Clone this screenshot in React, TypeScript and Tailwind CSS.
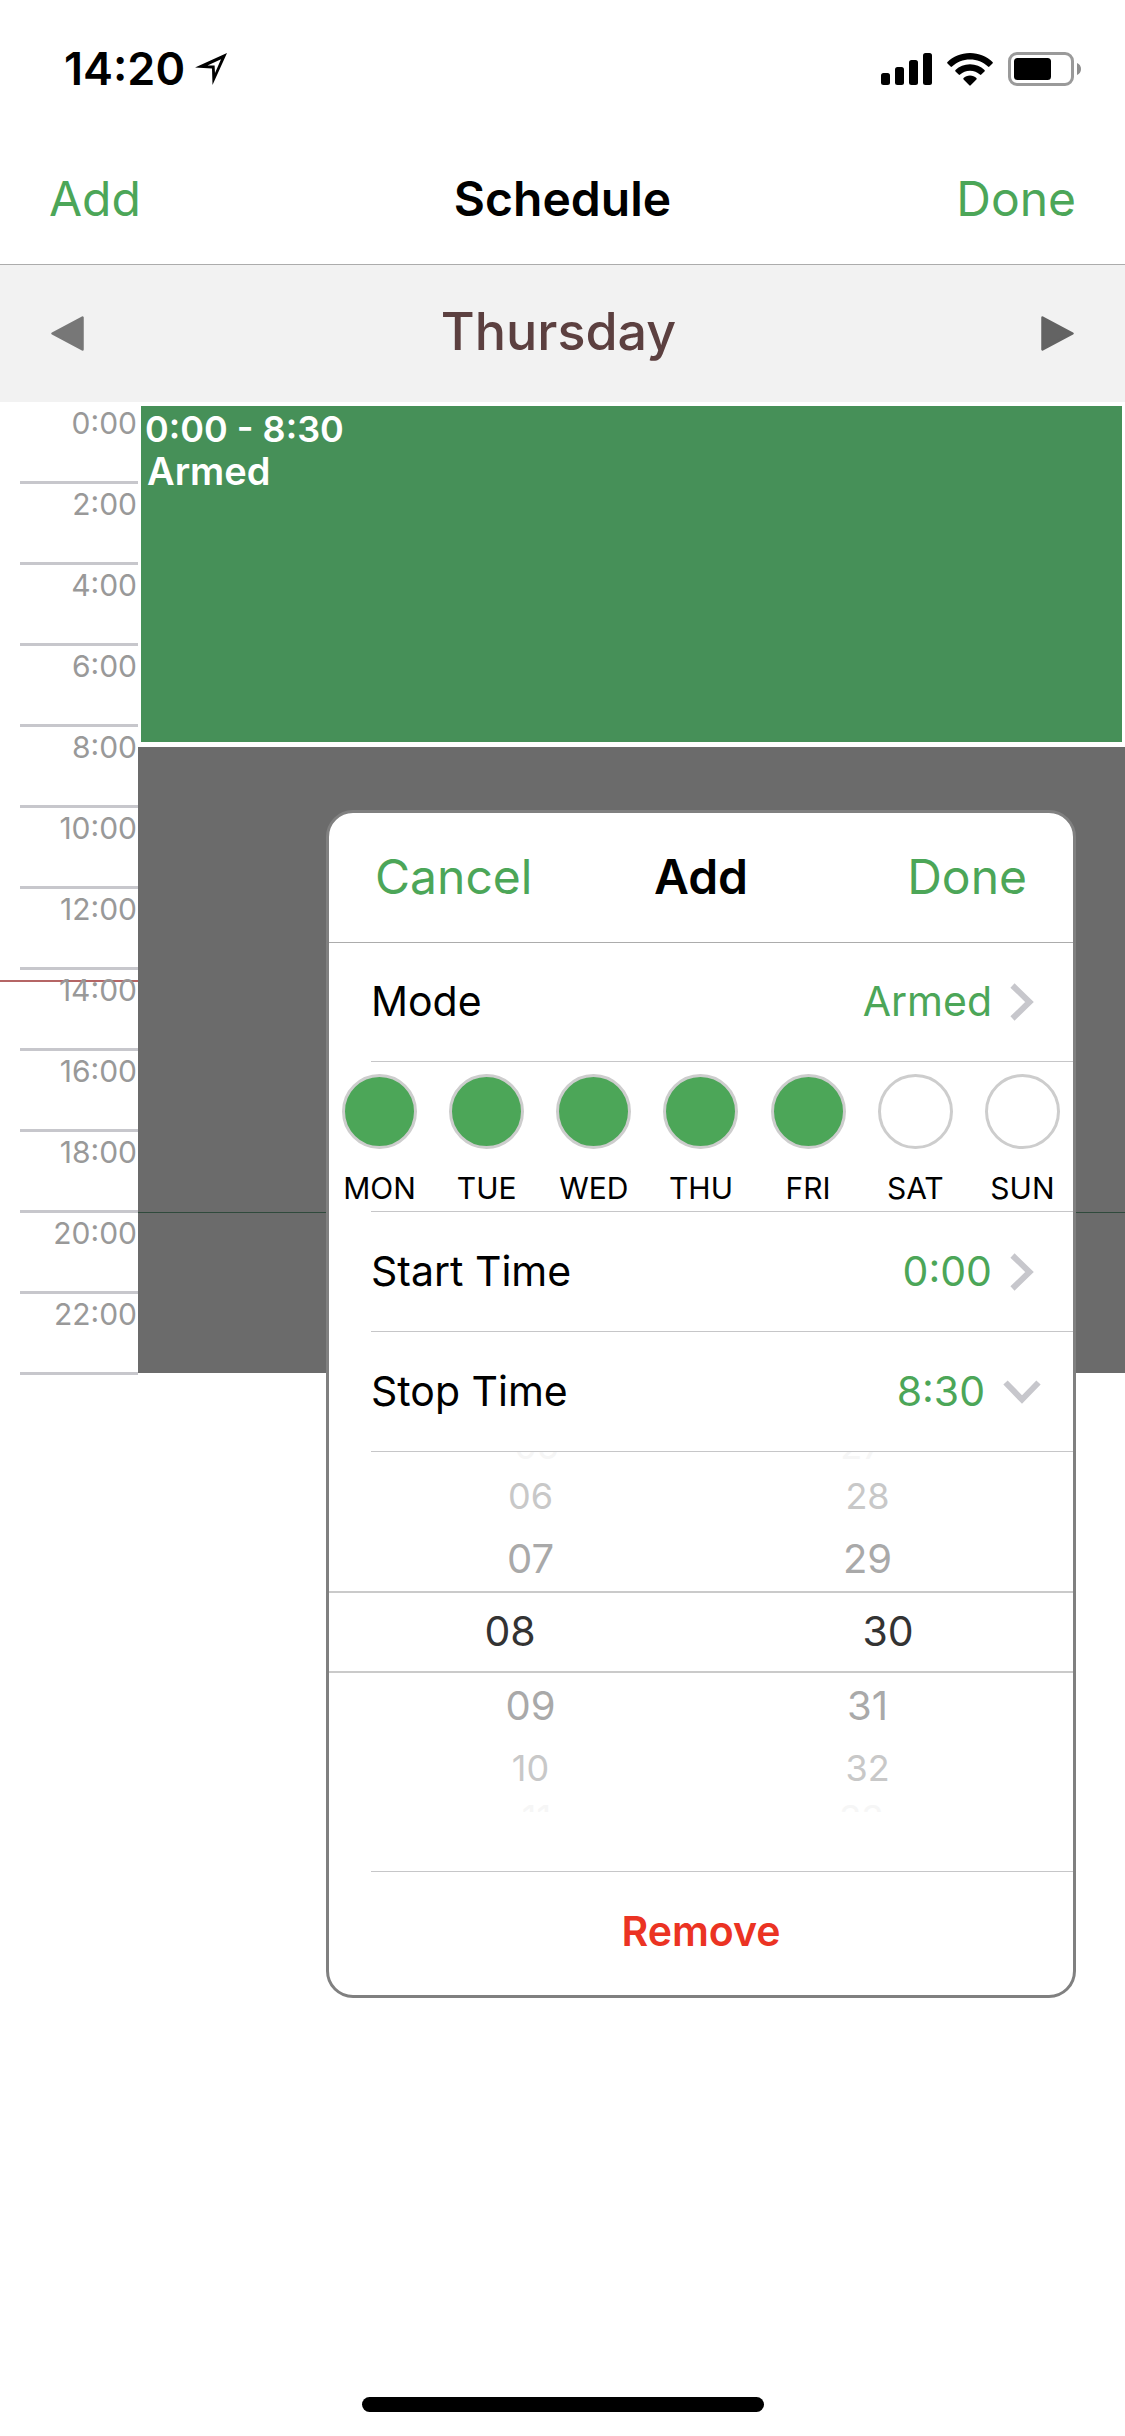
import React, { useState } from "react";

const HOURS = [
  "0:00",
  "2:00",
  "4:00",
  "6:00",
  "8:00",
  "10:00",
  "12:00",
  "14:00",
  "16:00",
  "18:00",
  "20:00",
  "22:00",
];

const DAYS = ["MON", "TUE", "WED", "THU", "FRI", "SAT", "SUN"];

// Wheel rows fade out the further they are from the selected one
const WHEEL_ROWS = [
  {
    hour: "05",
    minute: "27",
    className:
      "mx-auto h-[14px] max-w-[650px] content-end text-4xl leading-[40px] text-[#f6f6f6]",
  },
  {
    hour: "06",
    minute: "28",
    className: "mx-auto h-[60px] max-w-[674px] items-center text-4xl text-[#c8c8c8]",
  },
  {
    hour: "07",
    minute: "29",
    className: "mx-auto h-[65px] max-w-[674px] items-center text-[40px] text-[#a9a9a9]",
  },
  {
    hour: "08",
    minute: "30",
    className:
      "-mx-2 h-[82px] items-center border-y-2 border-[#cacaca] text-[41px] text-[#333]",
  },
  {
    hour: "09",
    minute: "31",
    className: "mx-auto h-[65px] max-w-[674px] items-center text-[40px] text-[#a9a9a9]",
  },
  {
    hour: "10",
    minute: "32",
    className: "mx-auto h-[60px] max-w-[674px] items-center text-4xl text-[#c8c8c8]",
  },
  {
    hour: "11",
    minute: "33",
    className:
      "mx-auto h-[14px] max-w-[650px] content-start text-4xl leading-[40px] text-[#f6f6f6]",
  },
];

function LocationIcon() {
  return (
    <svg width="32" height="32" viewBox="0 0 32 32" aria-hidden="true">
      <path
        fillRule="evenodd"
        d="M32 0 L17.5 32 L17 15.5 L0 14.5 Z M26 6.2 L12.5 12.4 L19.6 12.6 L20 20 Z"
      />
    </svg>
  );
}

function SignalIcon() {
  return (
    <svg width="51" height="32" viewBox="0 0 51 32" aria-hidden="true">
      <rect x="0" y="20" width="9" height="12" rx="2.5" />
      <rect x="14" y="14" width="9" height="18" rx="2.5" />
      <rect x="28" y="7" width="9" height="25" rx="2.5" />
      <rect x="42" y="0" width="9" height="32" rx="2.5" />
    </svg>
  );
}

function WifiIcon() {
  return (
    <svg width="46" height="33" viewBox="0 0 46 33" aria-hidden="true">
      <path d="M23 0 C14 0 6 3.500 0.500 9 Q-0.200 9.700 0.500 10.400 L3.600 13.600 Q4.300 14.300 5 13.600 C10 9 16 6.600 23 6.600 C30 6.600 36 9 41 13.600 Q41.700 14.300 42.400 13.600 L45.500 10.400 Q46.200 9.700 45.500 9 C40 3.500 32 0 23 0 Z" />
      <path d="M23 11.300 C17.300 11.300 12.300 13.500 8.500 17 Q7.800 17.700 8.500 18.400 L11.700 21.600 Q12.400 22.200 13.100 21.600 C15.800 19.200 19 17.800 23 17.800 C27 17.800 30.200 19.200 32.900 21.600 Q33.600 22.200 34.300 21.600 L37.500 18.400 Q38.200 17.700 37.500 17 C33.700 13.500 28.700 11.300 23 11.300 Z" />
      <path d="M23 22.600 C20.400 22.600 18.200 23.500 16.600 25 Q15.900 25.700 16.600 26.400 L22.300 32.300 Q23 33 23.700 32.300 L29.400 26.400 Q30.100 25.700 29.400 25 C27.800 23.500 25.600 22.600 23 22.600 Z" />
    </svg>
  );
}

function BatteryIcon() {
  return (
    <svg width="73" height="34" viewBox="0 0 73 34" aria-hidden="true">
      <rect
        x="1.5"
        y="1.5"
        width="63"
        height="31"
        rx="7.5"
        fill="none"
        stroke="#9a9a9a"
        strokeWidth="3"
      />
      <rect x="6" y="6" width="37" height="22" rx="3.5" />
      <path d="M69 11 C71.500 12 73 14.300 73 17 C73 19.700 71.500 22 69 23 Z" fill="#8e8e8e" />
    </svg>
  );
}

function ArrowIcon({ className }: { className: string }) {
  return (
    <svg width="33" height="35" viewBox="0 0 33 35" className={className} aria-hidden="true">
      <path
        d="M1.500 17.500 L31.500 1.500 V33.500 Z"
        fill="currentColor"
        stroke="currentColor"
        strokeWidth="2.5"
        strokeLinejoin="round"
      />
    </svg>
  );
}

function ChevronRight() {
  return (
    <svg width="24" height="38" viewBox="0 0 24 38" fill="none" aria-hidden="true">
      <path d="M2.500 2.500 L19.500 19 L2.500 35.500" stroke="#c7c7cc" strokeWidth="6" />
    </svg>
  );
}

function ChevronDown() {
  return (
    <svg width="38" height="24" viewBox="0 0 38 24" fill="none" aria-hidden="true">
      <path d="M2.500 2.500 L19 19.500 L35.500 2.500" stroke="#c7c7cc" strokeWidth="6" />
    </svg>
  );
}

function Divider() {
  return <div className="ml-[42px] h-px bg-[#c6c6c8]" />;
}

function SettingRow({
  label,
  value,
  icon,
  className,
}: {
  label: string;
  value: string;
  icon: React.ReactNode;
  className: string;
}) {
  return (
    <button
      type="button"
      className={`flex w-full items-center justify-between pl-[42px] text-[41px] ${className}`}
    >
      <span className="text-black">{label}</span>
      <span className="flex items-center gap-[18px] text-[#4ca658]">
        {value}
        {icon}
      </span>
    </button>
  );
}

function AddDialog() {
  const [days, setDays] = useState(["MON", "TUE", "WED", "THU", "FRI"]);

  const toggleDay = (day: string) => {
    setDays((prev) =>
      prev.includes(day) ? prev.filter((d) => d !== day) : [...prev, day]
    );
  };

  return (
    <section
      role="dialog"
      aria-label="Add"
      className="absolute top-[407px] right-[49px] left-[326px] z-10 overflow-hidden rounded-[27px] border-3 border-[#808080] bg-white"
    >
      <header className="grid h-[130px] grid-cols-3 items-center border-b border-[#acacac] px-[46px] pb-[2px] text-[48px]">
        <button type="button" className="text-left text-[#4ca658]">
          Cancel
        </button>
        <h2 className="text-center font-semibold">Add</h2>
        <button type="button" className="text-right text-[#4ca658]">
          Done
        </button>
      </header>

      <SettingRow
        label="Mode"
        value="Armed"
        icon={<ChevronRight />}
        className="h-[118px] pr-[39px]"
      />
      <Divider />

      <div className="-mx-[3px] grid grid-cols-7 pt-3 pb-2">
        {DAYS.map((day) => (
          <label key={day} className="flex flex-col items-center gap-6 text-[30px] leading-[30px]">
            <input
              type="checkbox"
              checked={days.includes(day)}
              onChange={() => toggleDay(day)}
              className="size-[75px] appearance-none rounded-full border-3 border-[#cdcdcd] bg-white checked:bg-[#4ca658]"
            />
            {day}
          </label>
        ))}
      </div>
      <Divider />

      <SettingRow
        label="Start Time"
        value="0:00"
        icon={<ChevronRight />}
        className="h-[119px] pr-[39px]"
      />
      <Divider />
      <SettingRow
        label="Stop Time"
        value="8:30"
        icon={<ChevronDown />}
        className="h-[119px] pr-8"
      />
      <Divider />

      {/* Time wheel */}
      <div className="pr-1 pb-[59px]">
        {WHEEL_ROWS.map((row) => (
          <div
            key={row.hour}
            className={`grid grid-cols-2 overflow-hidden text-center ${row.className}`}
          >
            <button type="button">{row.hour}</button>
            <button type="button">{row.minute}</button>
          </div>
        ))}
      </div>
      <Divider />

      <button
        type="button"
        className="h-[123px] w-full pb-1 text-[41px] font-semibold text-[#eb3323]"
      >
        Remove
      </button>
    </section>
  );
}

export default function App() {
  return (
    <div className="flex min-h-screen flex-col bg-white font-['Inter',sans-serif] text-black">
      {/* Status bar */}
      <div className="flex h-[138px] items-center justify-between pr-11 pl-16">
        <div className="flex items-center gap-[10px]">
          <span className="text-[45px] font-semibold">14:20</span>
          <LocationIcon />
        </div>
        <div className="flex items-center gap-[15px]">
          <SignalIcon />
          <WifiIcon />
          <BatteryIcon />
        </div>
      </div>

      <header className="grid h-[127px] grid-cols-3 items-center border-b border-[#acacac] px-[49px] pb-1 text-[48px]">
        <button type="button" className="text-left text-[#4ca658]">
          Add
        </button>
        <h1 className="text-center font-semibold">Schedule</h1>
        <button type="button" className="text-right text-[#4ca658]">
          Done
        </button>
      </header>

      <div className="flex h-[137px] items-center justify-between bg-[#f2f2f2] px-[51px]">
        <button type="button" aria-label="Previous day">
          <ArrowIcon className="text-[#777]" />
        </button>
        <span className="pr-2 pb-1 text-[52px] font-medium text-[#5c4040]">Thursday</span>
        <button type="button" aria-label="Next day">
          <ArrowIcon className="rotate-180 text-[#636363]" />
        </button>
      </div>

      <main className="relative mt-px flex">
        {/* Current time */}
        <div className="absolute top-[577px] left-0 h-[2px] w-[138px] bg-[#b56565]" />
        <ol className="relative w-[138px] pl-5">
          {HOURS.map((hour) => (
            <li
              key={hour}
              className="h-[81px] border-b-3 border-[#c7c7cc] pr-px text-right text-[30px] leading-[40px] text-[#999]"
            >
              {hour}
            </li>
          ))}
        </ol>

        <div className="flex flex-1 flex-col pt-[3px] pb-[2px]">
          <div className="mx-[3px] mb-[5px] h-[336px] bg-[#469058] pt-[2px] pl-1 leading-[42px] font-semibold text-white">
            <p className="text-4xl leading-[42px]">0:00 - 8:30</p>
            <p className="pl-[2px] text-[38px]">Armed</p>
          </div>
          <div className="flex-1 bg-[#6b6b6b] pt-[465px]">
            <div className="h-px bg-[#2f4a3c]" />
          </div>
        </div>

        <AddDialog />
      </main>

      <div className="mx-auto mt-auto mb-6 h-[15px] w-[402px] rounded-full bg-black" />
    </div>
  );
}
